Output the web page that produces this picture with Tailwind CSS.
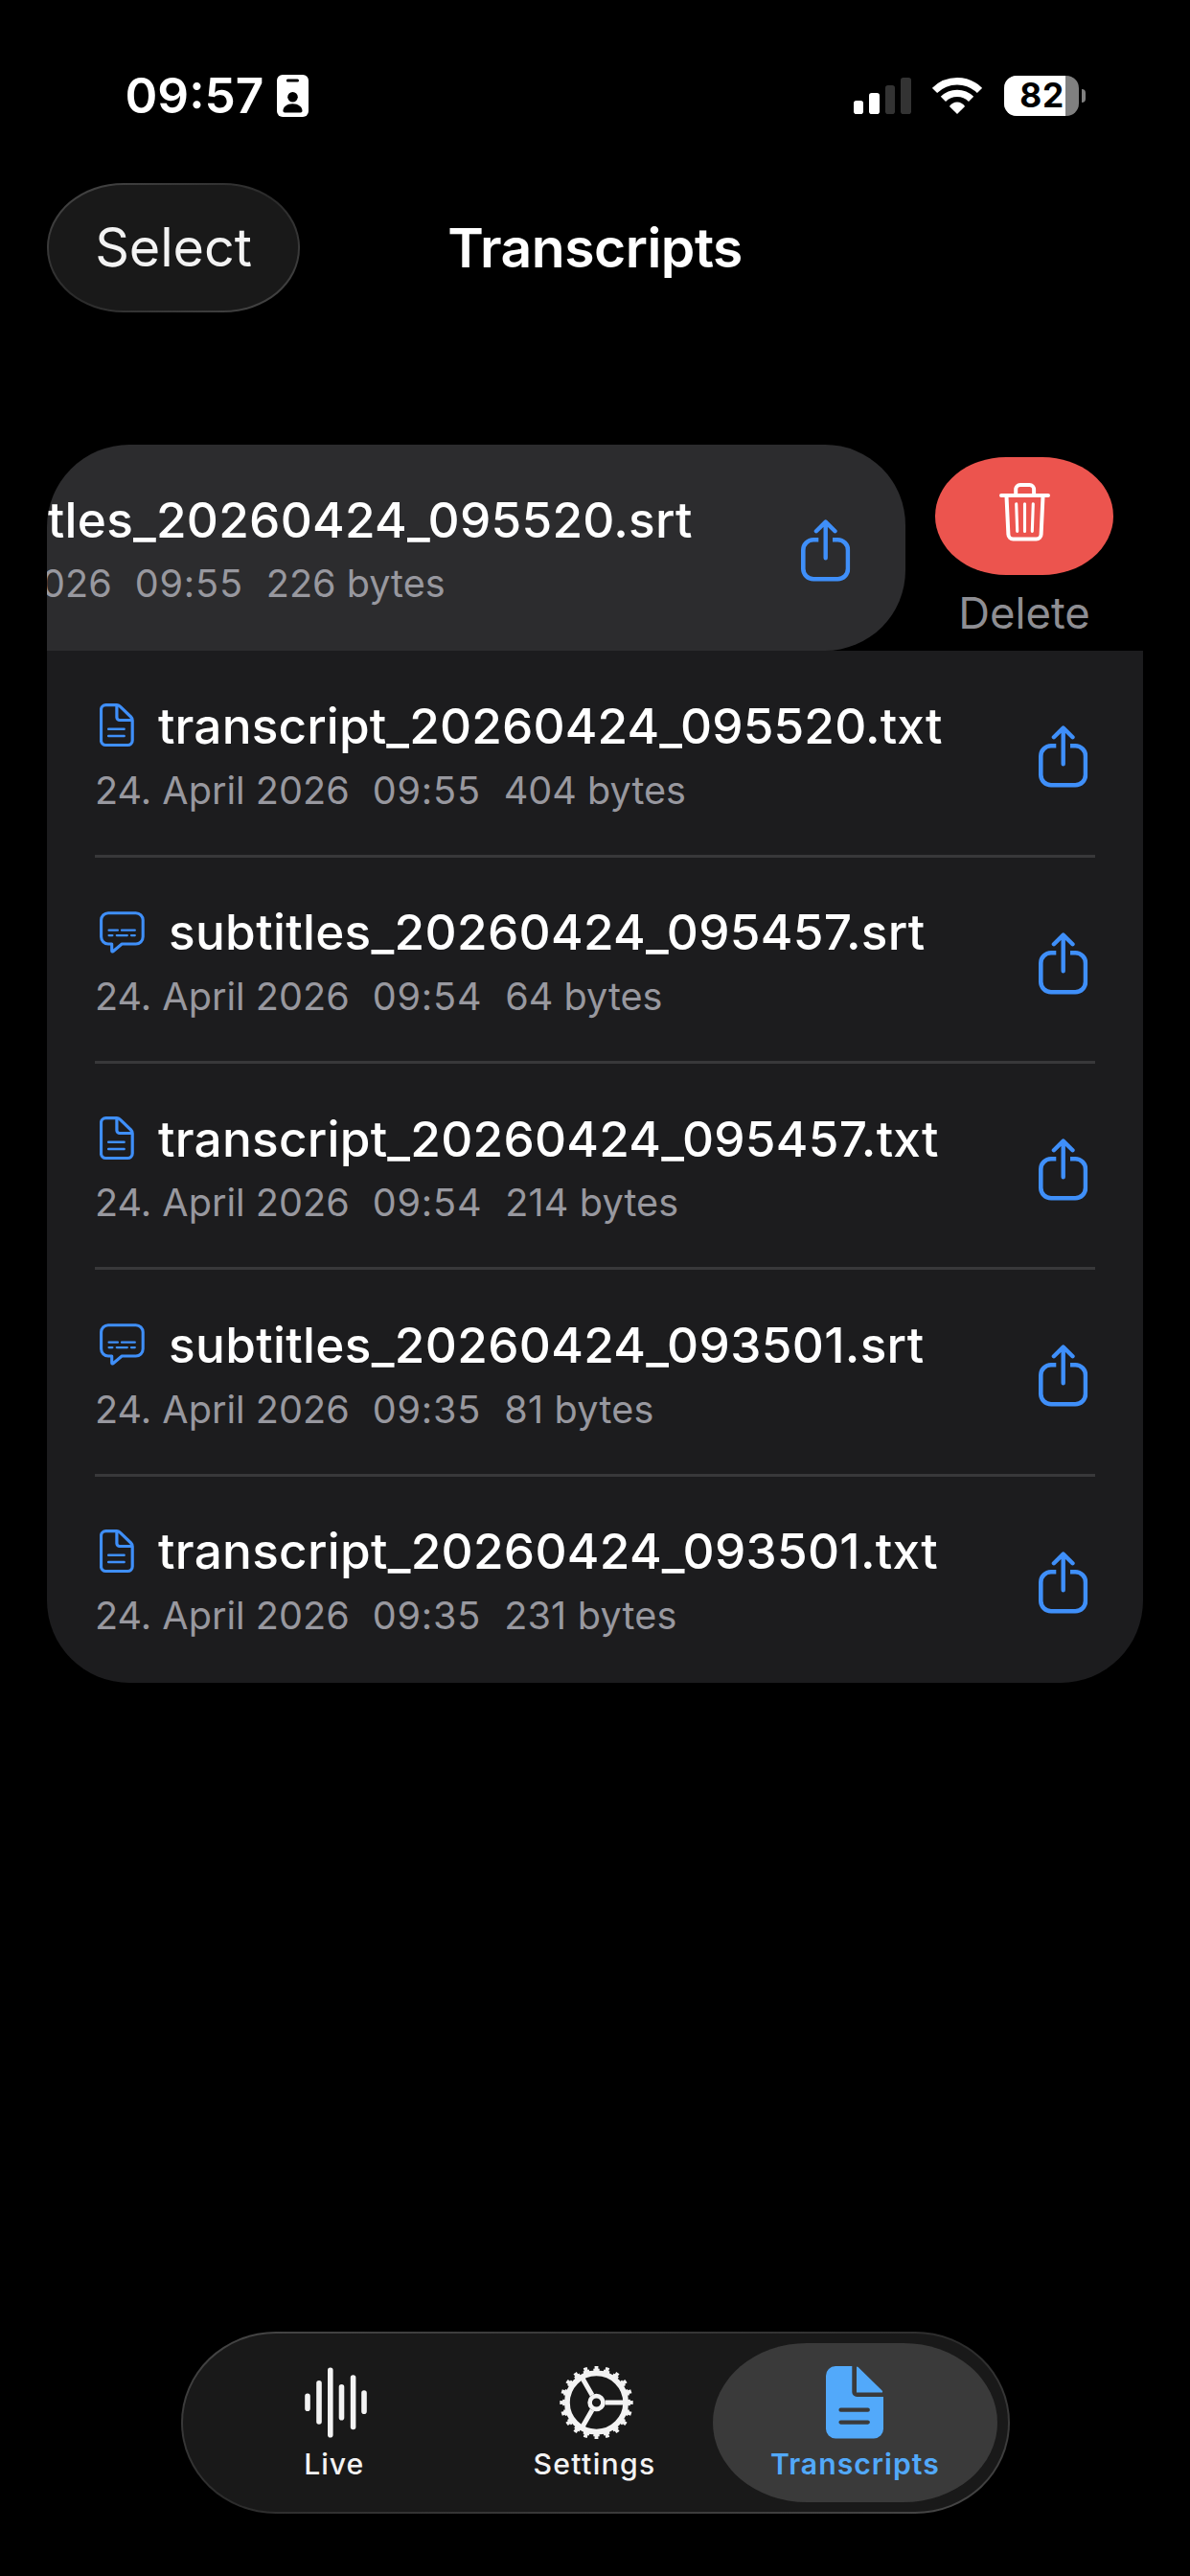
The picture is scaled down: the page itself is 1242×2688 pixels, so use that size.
<!DOCTYPE html>
<html lang="en">
<head>
<meta charset="utf-8">
<title>Transcripts</title>
<script src="https://cdn.jsdelivr.net/npm/@tailwindcss/browser@4"></script>
</head>
<body class="bg-black">
<svg class="hidden">
  <symbol id="share" viewBox="0 0 51.3 65">
    <g fill="none" stroke="#3f8ff9" stroke-width="4.6">
      <path d="M18.3 21.3H13A10.7 10.7 0 0 0 2.3 32V51.5A10.7 10.7 0 0 0 13 62.2H38.3A10.7 10.7 0 0 0 49 51.5V32A10.7 10.7 0 0 0 38.3 21.3H33"/>
      <path stroke-width="4.4" stroke-linecap="round" stroke-linejoin="round" d="M25.7 3V40.3M15.9 12.2L25.7 2.6L35.5 12.2"/>
    </g>
  </symbol>
  <symbol id="doc" viewBox="0 0 36 46">
    <g fill="none" stroke="#3f8ff9" stroke-width="3.2" stroke-linecap="round">
      <path d="M6.5 1.6H17.5q2.2 0 3.8 1.6L32.6 14q1.6 1.6 1.6 3.8V38.5a5 5 0 0 1-5 5H6.5a5 5 0 0 1-5-5V6.6a5 5 0 0 1 5-5z"/>
      <path d="M17.9 2V14.5a3 3 0 0 0 3 3H33.5"/>
      <path stroke-width="2.5" d="M9.2 26.7H25.6M9.2 34.1H25.6"/>
    </g>
  </symbol>
  <symbol id="bubble" viewBox="0 0 47 44">
    <g fill="none" stroke="#3f8ff9" stroke-width="3.1" stroke-linejoin="round" stroke-linecap="round">
      <path d="M9 1.7H37.8A7.4 7.4 0 0 1 45.2 9.1V26.6A7.4 7.4 0 0 1 37.8 34H23.2L14 41.7Q12.7 42.6 12.7 41V34H9A7.4 7.4 0 0 1 1.6 26.6V9.1A7.4 7.4 0 0 1 9 1.7z"/>
      <path stroke-width="2.3" d="M9.6 19.7H18.9M23 19.7H36.8M9.6 25.1H13.4M17.8 25.1H28.8M33 25.1H36.8"/>
    </g>
  </symbol>
</svg>
<div class="flex h-[2688px] w-[1242px] flex-col overflow-hidden bg-black font-[Inter,sans-serif] text-white">

  <!-- Status bar -->
  <div class="mt-[60px] flex h-20 items-center pr-[109px] pl-[130.5px]">
    <span class="text-[51.3px] leading-none font-semibold">09:57</span>
    <svg class="ml-[13.5px] h-11 w-[33px]" viewBox="0 0 33 44"><rect width="33" height="44" rx="6" fill="#fff"/><rect x="9.8" y="4.6" width="13.2" height="3" rx="1.5"/><circle cx="16.5" cy="23.2" r="5.3"/><path d="M6.4 37.8C6.4 33.5 10.6 30.2 16.4 30.2S26.5 33.5 26.5 37.8Q26.5 39.6 24.7 39.6H8.2Q6.4 39.6 6.4 37.8z"/></svg>
    <div class="ml-auto flex items-center">
      <svg class="h-[38px] w-[60px]" viewBox="0 0 60 38"><rect y="24" width="10" height="14" rx="2.8" fill="#fff"/><rect x="16" y="16" width="11" height="22" rx="2.8" fill="#fff"/><rect x="33" y="8" width="10" height="30" rx="2.8" fill="#333"/><rect x="49" width="11" height="38" rx="2.8" fill="#333"/></svg>
      <svg class="ml-[22px] h-[38px] w-[52px]" viewBox="0 0 52 38"><path fill="none" stroke="#fff" stroke-width="7.4" d="M2.5 13.5A33.2 33.2 0 0 1 49.5 13.5M11.4 22.4A20.7 20.7 0 0 1 40.6 22.4"/><path fill="#fff" d="M26 38L17.9 29.9Q21 25.7 26 25.6Q31 25.7 34.1 29.9z"/></svg>
      <div class="ml-[23px] flex h-[42px] w-[78px] items-center overflow-hidden rounded-[13px] bg-[#808080]">
        <div class="flex h-full w-16 items-center justify-end bg-white pr-px"><span class="text-[35.3px] leading-none font-bold tracking-[0.8px] text-black">82</span></div>
      </div>
      <div class="ml-[3px] h-[14px] w-1 rounded-r-full bg-[#808080]"></div>
    </div>
  </div>

  <!-- Navigation bar -->
  <div class="mt-[51px] grid h-[134.5px] grid-cols-[1fr_auto_1fr] items-center px-[49px]">
    <button class="h-[134.5px] w-[264px] justify-self-start rounded-[80px/67px] bg-linear-to-br from-[#474747] via-[#2a2a2a] to-[#474747] p-[2px]">
      <span class="flex size-full items-center justify-center rounded-[78px/65px] bg-[#191919] text-[55.7px] leading-none tracking-[-0.1px] text-[#f3f3f3]">Select</span>
    </button>
    <h1 class="text-[57px] leading-none font-semibold tracking-[-0.5px]">Transcripts</h1>
    <span></span>
  </div>

  <!-- File list -->
  <main class="mt-[138.5px] px-[49px]">
    <div class="flex h-[215.33px] items-start">
      <div class="flex h-full w-[896px] justify-end overflow-hidden rounded-l-none rounded-r-[84px] rounded-tl-[86px] bg-[#2c2c2e]">
        <div class="flex w-[1144px] shrink-0 pr-[57.5px] pl-[50px]">
          <div class="flex-1 pt-[45px]">
            <div class="flex h-[66px] items-center pl-[5px]"><svg class="mr-[25px] h-11 w-[47px]"><use href="#bubble"/></svg><span class="text-[51.3px] font-medium tracking-[0.25px] whitespace-nowrap">subtitles_20260424_095520.srt</span></div>
            <div class="mt-[9px] flex h-[52px] items-center gap-6 text-[39.6px] tracking-[0.02px] text-[#98989f]"><span>24. April 2026</span><span class="tracking-[0.8px]">09:55</span><span>226 bytes</span></div>
          </div>
          <svg class="mt-[78px] h-[65px] w-[51.3px]"><use href="#share"/></svg>
        </div>
      </div>
      <div class="ml-[31px] flex w-[186px] flex-col items-center pt-[13px]">
        <button class="flex h-[123px] w-full items-center justify-center rounded-[74px/61.5px] bg-[#ec544e] pb-2">
          <svg class="h-[61px] w-[53px]" viewBox="0 0 53 61" fill="none" stroke="#fff" stroke-linecap="round"><path stroke-width="4" d="M2 13H51M17.2 12V6.5A4.5 4.5 0 0 1 21.7 2H31.6A4.5 4.5 0 0 1 36.1 6.5V12M7.5 14L9.4 53.6A5 5 0 0 0 14.4 58.4H38.6A5 5 0 0 0 43.6 53.6L45.5 14"/><path stroke-width="3.1" d="M17.7 21.8L18.7 50.4M26.5 21.8V50.4M35.3 21.8L34.3 50.4"/></svg>
        </button>
        <span class="mt-[12.5px] text-[45.4px] leading-[54px] text-[#8e8e93]">Delete</span>
      </div>
    </div>

    <ul class="overflow-hidden rounded-b-[86px] bg-[#1c1c1e]">
      <li class="h-[215.33px] px-[50px]"><div class="flex h-full border-b-[3px] border-[#38383a] pr-[7.5px]">
        <div class="flex-1 pt-[45px]">
          <div class="flex h-[66px] items-center pl-[5px]"><svg class="mr-[25px] h-[46px] w-9"><use href="#doc"/></svg><span class="text-[51.3px] font-medium tracking-[0.15px]">transcript_20260424_095520.txt</span></div>
          <div class="mt-[9px] flex h-[52px] items-center gap-6 text-[39.6px] tracking-[0.02px] text-[#98989f]"><span>24. April 2026</span><span class="tracking-[0.8px]">09:55</span><span>404 bytes</span></div>
        </div>
        <svg class="mt-[78px] h-[65px] w-[51.3px]"><use href="#share"/></svg>
      </div></li>
      <li class="h-[215.33px] px-[50px]"><div class="flex h-full border-b-[3px] border-[#38383a] pr-[7.5px]">
        <div class="flex-1 pt-[45px]">
          <div class="flex h-[66px] items-center pl-[5px]"><svg class="mr-[25px] h-11 w-[47px]"><use href="#bubble"/></svg><span class="text-[51.3px] font-medium tracking-[0.31px]">subtitles_20260424_095457.srt</span></div>
          <div class="mt-[9px] flex h-[52px] items-center gap-6 text-[39.6px] tracking-[0.02px] text-[#98989f]"><span>24. April 2026</span><span class="tracking-[0.8px]">09:54</span><span>64 bytes</span></div>
        </div>
        <svg class="mt-[78px] h-[65px] w-[51.3px]"><use href="#share"/></svg>
      </div></li>
      <li class="h-[215.33px] px-[50px]"><div class="flex h-full border-b-[3px] border-[#38383a] pr-[7.5px]">
        <div class="flex-1 pt-[45px]">
          <div class="flex h-[66px] items-center pl-[5px]"><svg class="mr-[25px] h-[46px] w-9"><use href="#doc"/></svg><span class="text-[51.3px] font-medium tracking-[0.25px]">transcript_20260424_095457.txt</span></div>
          <div class="mt-[9px] flex h-[52px] items-center gap-6 text-[39.6px] tracking-[0.02px] text-[#98989f]"><span>24. April 2026</span><span class="tracking-[0.8px]">09:54</span><span class="tracking-[0.15px]">214 bytes</span></div>
        </div>
        <svg class="mt-[78px] h-[65px] w-[51.3px]"><use href="#share"/></svg>
      </div></li>
      <li class="h-[215.33px] px-[50px]"><div class="flex h-full border-b-[3px] border-[#38383a] pr-[7.5px]">
        <div class="flex-1 pt-[45px]">
          <div class="flex h-[66px] items-center pl-[5px]"><svg class="mr-[25px] h-11 w-[47px]"><use href="#bubble"/></svg><span class="text-[51.3px] font-medium tracking-[0.33px]">subtitles_20260424_093501.srt</span></div>
          <div class="mt-[9px] flex h-[52px] items-center gap-6 text-[39.6px] tracking-[0.02px] text-[#98989f]"><span>24. April 2026</span><span class="tracking-[0.8px]">09:35</span><span class="tracking-[0.25px]">81 bytes</span></div>
        </div>
        <svg class="mt-[78px] h-[65px] w-[51.3px]"><use href="#share"/></svg>
      </div></li>
      <li class="h-[215.33px] px-[50px]"><div class="flex h-full pr-[7.5px]">
        <div class="flex-1 pt-[45px]">
          <div class="flex h-[66px] items-center pl-[5px]"><svg class="mr-[25px] h-[46px] w-9"><use href="#doc"/></svg><span class="text-[51.3px] font-medium tracking-[0.28px]">transcript_20260424_093501.txt</span></div>
          <div class="mt-[9px] flex h-[52px] items-center gap-6 text-[39.6px] tracking-[0.02px] text-[#98989f]"><span>24. April 2026</span><span class="tracking-[0.8px]">09:35</span><span class="tracking-[0.2px]">231 bytes</span></div>
        </div>
        <svg class="mt-[78px] h-[65px] w-[51.3px]"><use href="#share"/></svg>
      </div></li>
    </ul>
  </main>

  <!-- Tab bar -->
  <nav class="mx-auto mt-auto mb-[65.5px] h-[189.5px] w-[865px] rounded-[99px/95px] bg-linear-to-br from-[#444] from-5% via-[#2c2c2c] to-[#444] to-95% p-[2px]">
    <div class="flex size-full rounded-[97px/93px] bg-[#191919] p-[10px] text-[#f3f3f3]">
      <a class="flex w-[296.5px] shrink-0 flex-col items-center pt-6">
        <svg class="ml-[3px] h-[76px] w-[65px]" viewBox="0 0 65 76" fill="none" stroke="#f3f3f3" stroke-width="5.6" stroke-linecap="round"><path d="M3 31.2V44.2M15 17.7V58M26.8 4.2V71.8M38.5 21.7V53.7M50.6 12V63.5M62 28V47.3"/></svg>
        <span class="mt-[8.4px] text-[30.2px] leading-9 font-medium tracking-[1px]">Live</span>
      </a>
      <a class="-ml-[24.7px] flex w-[296.5px] shrink-0 flex-col items-center pt-6">
        <svg class="ml-[4px] h-[76px] w-[77px]" viewBox="0 0 77 76" fill="none" stroke="#f3f3f3">
          <g transform="translate(38.5 38)">
            <circle r="30.6" stroke-width="5.8"/>
            <circle r="34.1" stroke-width="2.6" pathLength="200" stroke-dasharray="6 4" stroke-dashoffset="3"/>
            <circle r="36.4" stroke-width="3.6" pathLength="200" stroke-dasharray="3.4 6.6" stroke-dashoffset="1.7"/>
            <circle r="6.9" stroke-width="4.6"/>
            <path stroke-width="5" d="M9 0H30M-4.5 7.8L-15 26M-4.5 -7.8L-15 -26"/>
          </g>
        </svg>
        <span class="mt-[8.4px] text-[30.2px] leading-9 font-medium tracking-[1.3px]">Settings</span>
      </a>
      <a class="-ml-[24.7px] flex w-[296.5px] shrink-0 flex-col items-center rounded-[98px/83px] bg-[#3a3a3a] pt-6 text-[#52a9fa]">
        <svg class="h-[76px] w-[60px]" viewBox="0 0 60 76"><path fill="#52a9fa" d="M10 0H27.3V27A5 5 0 0 0 32.3 32H60V65.5A10 10 0 0 1 50 75.5H10A10 10 0 0 1 0 65.5V10A10 10 0 0 1 10 0zM32 1.5Q32.2 0 33.6 1L58.6 25.6Q60 27.6 58 27.6H32z"/><path stroke="#3a3a3a" stroke-width="4.2" stroke-linecap="round" d="M15.5 45.7H43.8M15.5 58.6H43.8"/></svg>
        <span class="mt-[8.4px] text-[30.2px] leading-9 font-semibold tracking-[1px]">Transcripts</span>
      </a>
    </div>
  </nav>
</div>
</body>
</html>
